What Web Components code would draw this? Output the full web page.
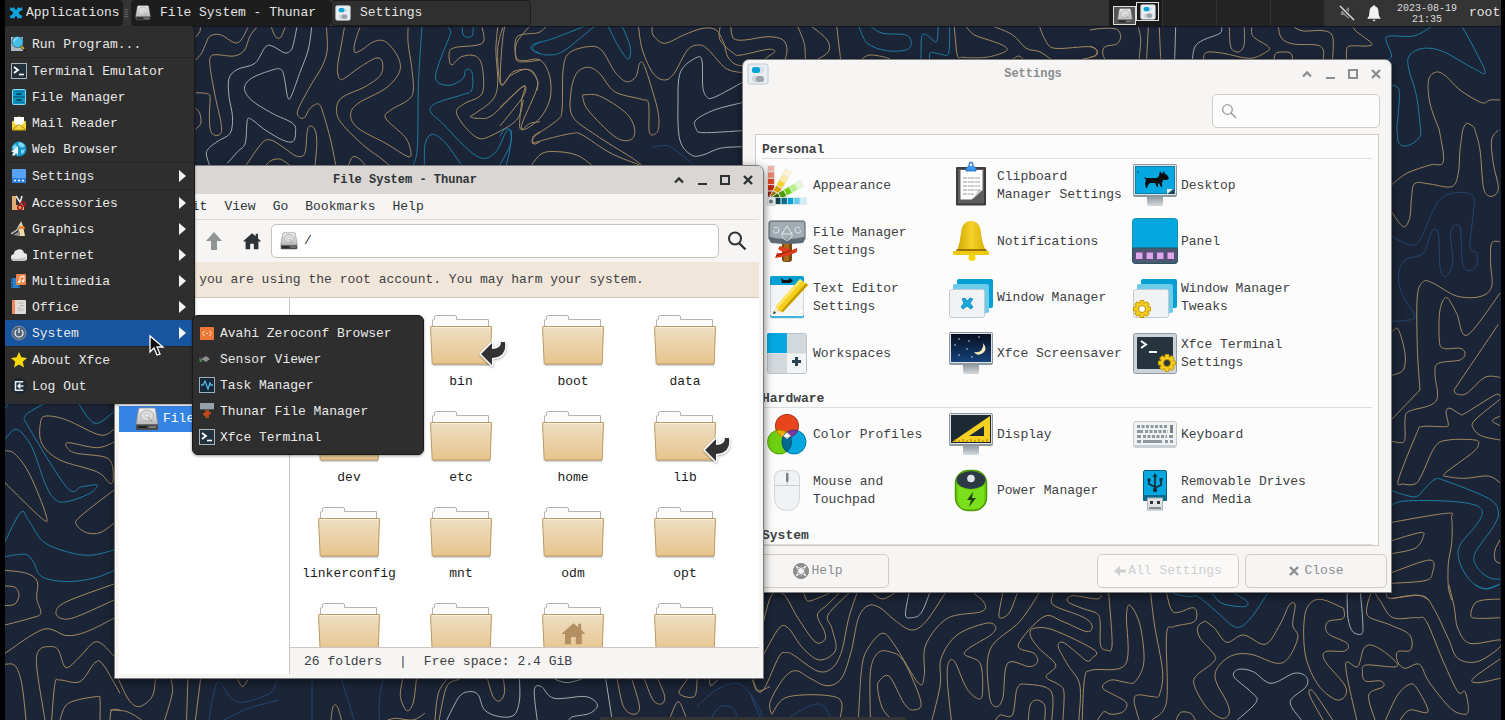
<!DOCTYPE html>
<html lang="en">
<head>
<meta charset="utf-8">
<title>Xfce Desktop</title>
<style>
  html, body { margin: 0; height: 100%; background: #000; }
  body {
    font-family: "Liberation Mono", "DejaVu Sans Mono", monospace;
    font-size: 13px; line-height: 18px; color: #2e3436;
  }
</style>
</head>
<body>
<xf-desktop>
  <xf-panel slot="panel"></xf-panel>

  <xf-window class="settings" heading="Settings" icon="toggles" inactive>
    <xf-settings></xf-settings>
  </xf-window>

  <xf-window class="thunar" heading="File System - Thunar" icon="drive">
    <xf-thunar></xf-thunar>
  </xf-window>

  <xf-menu slot="menu">
    <xf-item icon="run">Run Program...</xf-item>
    <hr>
    <xf-item icon="term">Terminal Emulator</xf-item>
    <xf-item icon="cabinet">File Manager</xf-item>
    <xf-item icon="mail">Mail Reader</xf-item>
    <xf-item icon="globe">Web Browser</xf-item>
    <hr>
    <xf-item icon="panelblue" more>Settings</xf-item>
    <hr>
    <xf-item icon="tools" more>Accessories</xf-item>
    <xf-item icon="graphics" more>Graphics</xf-item>
    <xf-item icon="cloud" more>Internet</xf-item>
    <xf-item icon="media" more>Multimedia</xf-item>
    <xf-item icon="office" more>Office</xf-item>
    <xf-item icon="power" more selected>System</xf-item>
    <hr>
    <xf-item icon="star">About Xfce</xf-item>
    <xf-item icon="logout">Log Out</xf-item>
  </xf-menu>

  <xf-menu slot="submenu" sub>
    <xf-item icon="avahi">Avahi Zeroconf Browser</xf-item>
    <xf-item icon="sensor">Sensor Viewer</xf-item>
    <xf-item icon="task">Task Manager</xf-item>
    <xf-item icon="hammer">Thunar File Manager</xf-item>
    <xf-item icon="term">Xfce Terminal</xf-item>
  </xf-menu>
</xf-desktop>

<script>
/* ---------- icons ---------- */
const monitor = screen => `
  <linearGradient id="st" x2="0" y2="1"><stop stop-color="#8b949b"/><stop offset="1" stop-color="#d5dadd"/></linearGradient>
  <path d="M16 35h16v8q0 2-2 2H18q-2 0-2-2z" fill="url(#st)"/>
  <rect x="2" y="3" width="44" height="33" rx="2" fill="#8d979e"/>
  <rect x="3" y="4" width="42" height="30" rx="1" fill="#dfe3e5"/>${screen}`;
const cog = (x, y, hole) => `<g transform="translate(${x} ${y})"><g fill="#c79a00">${
  [0, 45, 90, 135].map(a => `<rect x="-2.4" y="-9" width="4.8" height="18" rx="1" transform="rotate(${a})"/>`).join('')
  }</g><circle r="7" fill="#c79a00"/><circle r="6" fill="#f5cd1d"/><g fill="#f5cd1d">${
  [0, 45, 90, 135].map(a => `<rect x="-1.5" y="-8" width="3" height="16" transform="rotate(${a})"/>`).join('')
  }</g><circle r="3.5" fill="${hole}" stroke="#b98d00"/></g>`;
const fan = (angle, colors) => `<g transform="rotate(${angle} 8 40)">${
  colors.map((c, i) => `<rect x="4.5" y="${4.5 + i * 6.4}" width="7" height="6.4" fill="${c}" stroke="#e6eaec" stroke-width=".8"/>`).join('')}</g>`;
const layers = front => `
  <rect x="10" y="6" width="36" height="29" rx="2" fill="#04a0d4"/>
  <rect x="6" y="11" width="36" height="29" rx="2" fill="#6dcbec"/>
  <rect x="2.5" y="16.5" width="35" height="28" rx="2" fill="#f0f2f4" stroke="#c3cbd1"/>${front}`;
const house = 'M12 3.5L2 12.5h3V21h5v-6h4v6h5v-8.5h3L18.5 9V4H16v2.8z';

const ICONS = {
  appearance: [48, fan(0, ['#ecb5aa', '#e58470', '#de4526', '#bd2c10', '#8a1c08']) +
    fan(30, ['#fbf4cf', '#f9ec9c', '#f5d42a', '#d7a200', '#9c6c00']) +
    fan(60, ['#e3f8d0', '#b5ef86', '#6fd010', '#4e9a06', '#2c5c04']) +
    fan(90, ['#cdedf7', '#6acbe8', '#04a3d6', '#0a6a88', '#0d4250']) +
    '<rect x="4" y="36" width="8.5" height="8.5" rx="1.5" fill="#dfe3e6" stroke="#c5ccd1" stroke-width=".6"/><circle cx="8" cy="40.500" r="2" fill="#66737b"/>'],
  clipboard: [48, `<rect x="9" y="6" width="30" height="38.500" rx="1" fill="#3b3b3b"/><rect x="11" y="8" width="26" height="34.500" fill="#5d5d5d"/>
    <path d="M13.500 9h22v20l-11 9.500h-11z" fill="#fff"/><path d="M35.500 29l-4 0-6 9.500z" fill="#c9c9c9"/>
    <path d="M16 17h17M16 21h17M16 25h17M16 29h17M16 33h11" stroke="#8a8a8a" stroke-width=".9" stroke-dasharray="4 .8 2 .6"/>
    <path d="M19 10V7l3-2V3a2 2 0 0 1 4 0v2l3 2v3z" fill="#3c98f0" stroke="#1b66b8" stroke-width=".8"/><circle cx="24" cy="3.800" r="1.200" fill="#fff"/>`],
  desktop: [48, monitor(`<rect x="4" y="5" width="40" height="28" fill="#0b7fa8"/><rect x="5" y="6" width="38" height="26" fill="#04a7e0"/>
    <path d="M6 11q5 4 9 6h11l2-2 1-5 2 3 2-3 1 3 2 1 2 3-2 2h-4l-1 3v4h-1l-2-4-1 1v3h-1l-2-4h-5l-2 2-1 3h-1l-1-5 1-3-2-3q-5-3-7-6z" fill="#0a0d10"/><path d="M36 33v-5h6z" fill="#e8ecee"/><path d="M43 28v5h-6z" fill="#2d3b45"/>`)],
  hammerbig: [48, `<rect x="19" y="24" width="10" height="21" rx="3" fill="#7d4a10"/><rect x="21" y="24" width="5" height="20" fill="#a96a1c"/>
    <path d="M6 6q0-2 2-2h32q2 0 2 2v16q-18 6-36 0z" fill="#a3acb3" stroke="#4d5a63"/><path d="M6.500 20q17 4 35 0v3q0 2-2 3-16 2-31 0-2-1-2-3z" fill="#5f6c75"/>
    <path d="M19 17l5-8 5 8zM20 15a5 5 0 1 0 8 0M11 11q5-2 5 2 0 3-3 3-4 0-2-3M37 11q-5-2-5 2 0 3 3 3 4 0 2-3" fill="none" stroke="#dfe5e8"/>
    <path d="M12 41l2-5 7 0-6-4 2-3 12 4 5-2v4l-7 3-8 2z" fill="#dc3d1c"/><path d="M13 39l16-6" stroke="#8f1f0a"/>`],
  bell: [48, `<linearGradient id="g"><stop stop-color="#d3a900"/><stop offset=".5" stop-color="#f3d22a"/><stop offset="1" stop-color="#dcae00"/></linearGradient>
    <path d="M10 34q3-8 4-18Q15 4 24 4t10 12q1 10 5 18z" fill="url(#g)"/><path d="M10 32h29l1 2H9z" fill="#9a7200"/><rect x="6" y="34" width="36" height="4" rx="1" fill="#f0c80f"/><circle cx="25" cy="40.500" r="3.500" fill="#f8d500"/>`],
  panel: [48, `<rect x="1.500" y="1.500" width="45" height="45" rx="3" fill="#04a7e0" stroke="#168fb4"/><path d="M1.500 31h45v12.500q0 3-3 3h-39q-3 0-3-3z" fill="#485a6d" stroke="#2f5160"/>
    <g fill="#dba9e8" stroke="#6a3f86"><rect x="4.500" y="35" width="7.500" height="7.500" rx="1"/><rect x="15" y="35" width="7.500" height="7.500" rx="1"/><rect x="25.500" y="35" width="7.500" height="7.500" rx="1"/><rect x="36" y="35" width="7.500" height="7.500" rx="1"/></g>`],
  editor: [48, `<rect x="7.500" y="4" width="33" height="41" rx="1.500" fill="#f4f5f6" stroke="#d0d6da"/><path d="M7 12V5q0-2 2-2h30q2 0 2 2v7z" fill="#04a0d4"/><path d="M18 5l3 2h4l2-2 2 2 1 1-3 2h-8z" fill="#111"/>
    <path d="M7 42h34v1q0 2-2 2H9q-2 0-2-2z" fill="#3fb5de"/><path d="M8 41h32v2H8z" fill="#fff"/><path d="M33 41l7-8v8z" fill="#fff" stroke="#d6dadd" stroke-width=".6"/>
    <path d="M10 41l3-8 8 4z" fill="#f3e4c8"/><path d="M13 33L37 6l8 6-25 27-4-1z" fill="#f4d01c"/><path d="M18 38L43 10l2 2-25 27z" fill="#c79a00"/><path d="M13 33L37 6l2 2-24 27z" fill="#fbe66a"/><path d="M10 41l1-3 2 2z" fill="#222"/>`],
  winman: [48, layers('<path d="M15 26l3-1 2 3 3-3 3 1-3 4 3 4-2 2-4-3-4 3-2-2 3-4z" fill="#1ba8dc" stroke="#0b86b6" stroke-width=".8"/>')],
  tweaks: [48, layers(cog(11, 36, '#fff'))],
  workspaces: [48, `<rect x="4.500" y="4.500" width="39" height="40" rx="2" fill="#f1f3f5" stroke="#bcc4ca"/><path d="M24 5h19v19.500H24zM5 24.500h19V44H5z" fill="#d3d8dc"/><path d="M4 6q0-2 2-2h18v20H4z" fill="#04a7e0"/><path d="M32 28h3v3h3v3h-3v3h-3v-3h-3v-3h3z" fill="#2d4250"/>`],
  saver: [48, monitor(`<linearGradient id="n" x2="0" y2="1"><stop stop-color="#07101f"/><stop offset="1" stop-color="#16427c"/></linearGradient><rect x="4" y="5" width="40" height="28" fill="url(#n)"/>
    <path d="M36 14q5 6 0 10-6 4-9-1 6 1 8-3 2-3 1-6z" fill="#f5eaba"/><g fill="#fff"><circle cx="12" cy="10" r=".7"/><circle cx="22" cy="12" r=".7"/><circle cx="32" cy="8" r=".7"/><circle cx="8" cy="16" r=".7"/><circle cx="20" cy="20" r=".7"/><circle cx="12" cy="26" r=".7"/><circle cx="25" cy="28" r=".7"/></g>`)],
  termset: [48, `<rect x="2.500" y="4.500" width="43" height="40" rx="2" fill="#cdd3d8" stroke="#8f9aa2"/><rect x="6" y="8" width="36" height="32" rx="1" fill="#26343e"/><path d="M10 12l5 3.500-5 3.500" fill="none" stroke="#fff" stroke-width="2"/><path d="M18 23h8" stroke="#fff" stroke-width="2"/>` + cog(36, 34, '#26343e')],
  color: [48, `<circle cx="24" cy="16" r="12" fill="#e8451d"/><circle cx="16.500" cy="32" r="12.300" fill="#6fd010"/><circle cx="31" cy="32" r="12.300" fill="#04a7e0"/>
    <clipPath id="r"><circle cx="24" cy="16" r="12"/></clipPath><clipPath id="gr"><circle cx="16.500" cy="32" r="12.300"/></clipPath>
    <g clip-path="url(#r)"><circle cx="16.500" cy="32" r="12.300" fill="#f0b000"/><circle cx="31" cy="32" r="12.300" fill="#7b3aa0"/></g>
    <g clip-path="url(#gr)"><circle cx="31" cy="32" r="12.300" fill="#046a90"/></g><path d="M24 22l4 4-4 3-4-3z" fill="#fff"/>
    <g fill="none" stroke="#0005" stroke-width=".8"><circle cx="24" cy="16" r="11.700"/><circle cx="16.500" cy="32" r="12"/><circle cx="31" cy="32" r="12"/></g>`],
  display: [48, monitor(`<rect x="4" y="5" width="40" height="28" fill="#1d2a33"/><path d="M43 6v26H5z" fill="#f6cf23"/><path d="M37 16v10H22z" fill="#1d2a33"/><path d="M8 32v-3m4 3v-2m4 2v-3m4 3v-2m4 2v-3m4 3v-2m4 2v-3m4 3v-2m4 2v-3" stroke="#a07c00"/>`)],
  keyboard: [48, `<rect x="2.500" y="11.500" width="43" height="26" rx="2.500" fill="#f0f2f4" stroke="#c4cbd0"/><path d="M3 35h42v1q0 2-2 2H5q-2 0-2-2z" fill="#c9d0d5"/>
    <g fill="none" stroke="#8e989f" stroke-width="3"><path d="M6 16.500h31" stroke-dasharray="3 1.500"/><path d="M14 21.500h23" stroke-dasharray="3 1.500"/><path d="M12 26.500h24" stroke-dasharray="3 1.500"/><path d="M6 21.500h6M6 26.500h4M38 26.500h4M6 31.500h4M12 31.500h19M34 31.500h3M39 31.500h3"/><path d="M40.500 15v8" stroke="#77828a"/></g>`],
  mouse: [48, `<path d="M11.500 12q0-7.500 7.500-7.500h10q7.500 0 7.500 7.500v20Q36 44.500 24 44.500T11.500 32z" fill="#f0f2f4" stroke="#d0d6da"/><path d="M11.500 19.500h25M24 4.500v15" stroke="#c6cdd2" fill="none"/><rect x="23" y="7" width="2.500" height="9" rx="1" fill="#77828a"/>`],
  battery: [48, `<rect x="8.500" y="4.500" width="31" height="40" rx="13" fill="#6cd00c" stroke="#4e9a06" stroke-width="1.500"/><path d="M11 20q13 8 26 0v16q-3 6-8 7H18q-6-1-7-7z" fill="#7be01c"/><ellipse cx="24" cy="14" rx="14.500" ry="9" fill="#2b3a44"/><circle cx="24" cy="12.500" r="3.800" fill="#dfe4e7"/><path d="M26 26l-6 8h4l-2 7 7-9h-4z" fill="#24421a"/>`],
  usb: [48, `<path d="M12.500 6q0-1.500 1.500-1.500h20q1.500 0 1.500 1.500v28.500h-23z" fill="#04a7e0" stroke="#0c5e7c"/><path d="M12.500 29h23v5.500h-23z" fill="#0a6c8d"/><rect x="16.500" y="32" width="15" height="12" fill="#dfe3e6" stroke="#aab3b9"/><rect x="19" y="35" width="3" height="3" fill="#333"/><rect x="26" y="35" width="3" height="3" fill="#333"/><path d="M18 42h12" stroke="#333"/>
    <path d="M24 24V9M24 21l-6-3v-4M24 22l6-3v-4" stroke="#11303d" stroke-width="1.800" fill="none"/><path d="M21.500 11L24 7l2.500 4z" fill="#11303d"/><circle cx="24" cy="24" r="2.200" fill="#11303d"/><circle cx="18" cy="14" r="1.700" fill="#11303d"/><rect x="28.500" y="12" width="3" height="3" fill="#11303d"/>`],

  toggles: [22, `<rect x="1" y="1" width="20" height="20" rx="2" fill="#e9eef1" stroke="#c0c8ce"/><rect x="5" y="4" width="12" height="6" rx="3" fill="#d5dee4"/><rect x="5" y="4" width="8" height="6" rx="2.500" fill="#08a4d8"/><rect x="5" y="13" width="12" height="6" rx="3" fill="#d0d5d9" /><rect x="9" y="13" width="8" height="6" rx="2.500" fill="#9aa4ac"/>`],
  drive: [24, `<linearGradient id="d" x2="0" y2="1"><stop stop-color="#f4f4f4"/><stop offset="1" stop-color="#b9b9b9"/></linearGradient><path d="M3.500 2.500q0-1.500 1.500-1.500h14q1.500 0 1.500 1.500l2.500 15H1z" fill="url(#d)" stroke="#8a8a8a" stroke-width=".8"/><ellipse cx="12" cy="8.500" rx="6.500" ry="5.500" fill="#dcdcdc" stroke="#a3a3a3" stroke-width=".8"/><circle cx="12" cy="8.500" r="1.800" fill="#f8f8f8" stroke="#aaa" stroke-width=".6"/><path d="M17 15l-4-5" stroke="#999"/><path d="M1 17.500h22v4q0 1.500-1.500 1.500h-19Q1 23 1 21.500z" fill="#4a4a4a"/><path d="M3 20h9" stroke="#222" stroke-width="2"/><path d="M14 20h7" stroke="#aaa"/>`],
  run: [16, `<path d="M0 1h12v14H0z" fill="#aeb8bf"/><path d="M10 10l5 5" stroke="#222" stroke-width="3"/><path d="M9 9l4 4" stroke="#d9a521" stroke-width="2"/><circle cx="6.500" cy="6" r="5.600" fill="#45bfe6" stroke="#24607a" stroke-width=".8"/><path d="M3 6a4 4 0 0 1 4-4" stroke="#bfeaf8" fill="none"/>`],
  term: [16, `<rect x=".5" y=".5" width="15" height="15" fill="#22313b" stroke="#aab6be"/><path d="M3 4l4 3-4 3" fill="none" stroke="#fff" stroke-width="1.800"/><path d="M8 11.500h5" stroke="#fff" stroke-width="1.600"/>`],
  cabinet: [16, `<rect x="1.500" y=".5" width="13" height="15" rx="1" fill="#0c96c6" stroke="#8fd6ec"/><path d="M2 8h12" stroke="#08495f"/><path d="M3 2.500h10M3 13.500h10" stroke="#0775a0"/><path d="M5.500 5h5M5.500 11h5" stroke="#0a3547" stroke-width="1.400"/>`],
  mail: [16, `<path d="M1 7l7-6 7 6v8H1z" fill="#e9c62a"/><path d="M3 2h10v7l-5 3-5-3z" fill="#fff"/><path d="M1 6l7 6 7-6v9H1z" fill="#f4d63c"/><path d="M1 15l6-5h2l6 5" fill="none" stroke="#a88400"/><path d="M1 15h14" stroke="#caa400"/>`],
  globe: [16, `<circle cx="8" cy="8" r="7.500" fill="#1695c9"/><path d="M8 1q5 1 6 4l-3 2-3-2-1-2zM10 9l4-1-2 5-2-1zM1 6l4-3 1 3-3 3z" fill="#7ed7f2"/><path d="M7 5v9l-2-2-2 3-2-1 2-3H0z" fill="#f3f3f3"/>`],
  panelblue: [16, `<rect x="1" y="1" width="14" height="14" rx="1" fill="#55a4f8"/><path d="M1 10h14v4q0 1-1 1H2q-1 0-1-1z" fill="#2c7fe0"/><path d="M3 12.500h10" stroke="#fff" stroke-width="1.500" stroke-dasharray="2 2"/>`],
  tools: [16, `<path d="M1 1h4v9h8v5H1z" fill="#e0ad72"/><path d="M5 1l6 9M11 1L9 8" stroke="#e8e8e8" stroke-width="1.600"/><circle cx="12" cy="9" r="2.200" fill="none" stroke="#b01818" stroke-width="1.500"/><circle cx="9" cy="12.500" r="2.200" fill="none" stroke="#b01818" stroke-width="1.500"/>`],
  graphics: [16, `<path d="M10 0l2 5 2 10H7L8 5z" fill="#f1d9a8"/><path d="M8 5h5l1 3H8z" fill="#e8872b"/><path d="M0 13l6-4 3-6" stroke="#bfbfbf" stroke-width="1.500" fill="none"/><path d="M2 14l7-4v5z" fill="#8f8f8f"/>`],
  cloud: [16, `<path d="M4 14a3.500 3.500 0 0 1-1-7 4 4 0 0 1 3-4 4.500 4.500 0 0 1 7 3 4 4 0 0 1-1 8z" fill="#eaeaea"/><path d="M1 11q7 2 14-1 0 4-3 4H4q-3 0-3-3z" fill="#c3c3c3"/>`],
  media: [16, `<rect x="0" y="5" width="9" height="10" fill="#2b80c8"/><path d="M1 5v10M8 5v10" stroke="#0c2b46" stroke-dasharray="1.500 1"/><rect x="5" y="1" width="10" height="11" rx="1" fill="#f08545"/><path d="M9 9V4l4-1v5" fill="none" stroke="#fff"/><circle cx="8" cy="9" r="1.200" fill="#fff"/><circle cx="12" cy="8" r="1.200" fill="#fff"/>`],
  office: [16, `<rect x="1" y="1" width="14" height="14" rx="1" fill="#dedbd8"/><rect x="1" y="1" width="3" height="14" fill="#ec8a5c"/><path d="M7 4h6M7 9h3M7 11h6M9 6.500h4" stroke="#b8b3ae"/>`],
  power: [16, `<circle cx="8" cy="8" r="7" fill="#51647a" stroke="#8090a2"/><path d="M5.500 5a4 4 0 1 0 5 0M8 3v5" fill="none" stroke="#e8eef2" stroke-width="1.300"/>`],
  star: [16, `<path d="M8 0l2.400 5.300 5.600.6-4.200 3.800L13 15.600 8 12.600 3 15.600l1.200-5.900L0 5.900l5.600-.6z" fill="#f8da08"/>`],
  logout: [16, `<circle cx="8" cy="8" r="7.500" fill="#1f2d39" stroke="#18222b"/><path d="M11.500 4.500v-.8H4.500v8.600h7v-.8" fill="none" stroke="#e8eef2" stroke-width="1.500"/><path d="M7 8h5.500M9.500 5.500L7 8l2.500 2.500" fill="none" stroke="#e8eef2" stroke-width="1.500"/>`],
  avahi: [16, `<rect x="1" y="2" width="14" height="13" rx="1" fill="#ee7836"/><path d="M5.500 6l-2 2.500 2 2.500M10.500 6l2 2.500-2 2.500M7 8.500h2" fill="none" stroke="#fbe0cc"/>`],
  sensor: [16, `<path d="M2 8l5-3 4 3-4 3z" fill="#8e8e8e"/><path d="M0 6h3v2H0z" fill="#55306a"/><path d="M0 8h3v3H1z" fill="#393"/>`],
  task: [16, `<rect x=".5" y=".5" width="15" height="15" fill="#16293a" stroke="#9fb0bd"/><path d="M2 8h2l2-4 3 8 2-6 1 2h2" fill="none" stroke="#52b7df" stroke-width="1.300"/>`],
  hammer: [16, `<path d="M1 0h14v7H1z" fill="#97a1a8"/><path d="M1 6h14v1H1z" fill="#4c575f"/><path d="M6 7h4v8H6z" fill="#a34e17"/><path d="M4 10l8-1v2l-7 2z" fill="#d2401c"/>`],
  xfce: [16, `<path d="M2 2q2 2 4 0 1 3 2 3t2-3q2 2 4 0 0 3 1 3-4 1-4 3t4 3q-2 0-1 3-2-2-4 0-1-3-2-3t-2 3q-2-2-4 0 1-3-1-3 4-1 4-3T1 5q2 0 1-3z" fill="#12a1d8"/>`],
  mute: [16, `<path d="M2 6h3l5-4v12l-5-4H2z" fill="#8a8a8a"/><path d="M1 1l14 14" stroke="#343434" stroke-width="3.500"/><path d="M1 1l14 14" stroke="#ddd" stroke-width="1.400"/>`],
  ring: [16, `<path d="M2 13q2-2 2-6 0-4 3-5 0-1 1-1t1 1q3 1 3 5 0 4 2 6z" fill="#f2f2f2"/><path d="M6.500 14h3L8 15.500z" fill="#f2f2f2"/>`],
  grip: [10, `<path d="M2 .5h4M2 3.500h4M2 6.500h4M2 9.500h4" stroke="#777"/>`],
  left: [24, `<path d="M20 9v6h-8v6L3 12l9-9v6z" fill="#8e9192"/>`],
  right: [24, `<path d="M4 9v6h8v6l9-9-9-9v6z" fill="#8e9192"/>`],
  up: [24, `<path d="M12 3l8 9h-5v9H9v-9H4z" fill="#909494"/>`],
  home: [24, `<path d="${house}" fill="#2e3436"/>`],
  find: [24, `<circle cx="10" cy="9.500" r="6" fill="none" stroke="currentColor" stroke-width="2"/><path d="M14 14l6.500 6.500" stroke="currentColor" stroke-width="2.400"/>`],
  findthin: [16, `<circle cx="6.500" cy="6.500" r="4.800" fill="none" stroke="#9b9e9f" stroke-width="1.300"/><path d="M10 10l5 5" stroke="#9b9e9f" stroke-width="1.600"/>`],
  help: [16, `<circle cx="8" cy="8" r="6" fill="none" stroke="#8b8e8f" stroke-width="3.600"/><path d="M3 3l3 3M13 3l-3 3M3 13l3-3M13 13l-3-3" stroke="#f6f5f4" stroke-width="1.600"/><circle cx="8" cy="8" r="7.500" fill="none" stroke="#8b8e8f"/><circle cx="8" cy="8" r="3.500" fill="none" stroke="#8b8e8f"/>`],
  back: [12, `<path d="M12 4.500v3H6V11L0 6l6-5v3.500z" fill="#cfcfce"/>`],
  cross: [12, `<path d="M2 2l8 8M10 2l-8 8" stroke="currentColor" stroke-width="2.400"/>`],
  shade: [12, `<path d="M2 8.500l4-4 4 4" fill="none" stroke="currentColor" stroke-width="2.400"/>`],
  min: [12, `<path d="M2 10h9" stroke="currentColor" stroke-width="2"/>`],
  max: [12, `<rect x="2" y="2" width="8" height="8" fill="none" stroke="currentColor" stroke-width="2"/>`],
  more: [12, `<path d="M3 0l7 6-7 6z" fill="#f2f2f2"/>`],
  pointer: [24, `<path d="M3 2v16l4-4 3 7 3-1-3-7h6z" fill="#111" stroke="#fff" stroke-width="1.300"/>`],
};

class XfIcon extends HTMLElement {
  connectedCallback() {
    if (this.shadowRoot) return;
    const [box, art] = ICONS[this.getAttribute('name')];
    const size = this.getAttribute('size') || box;
    this.attachShadow({ mode: 'open' }).innerHTML =
      `<style>:host{display:inline-flex;flex:none}svg{display:block}</style>
       <svg width="${size}" height="${size}" viewBox="0 0 ${box} ${box}" aria-hidden="true">${art}</svg>`;
  }
}
customElements.define('xf-icon', XfIcon);

/* Small helper: registers an element whose shadow root comes from a render function. */
const RESET = `*,*::before{box-sizing:border-box}
  button,input{font:inherit;color:inherit;background:none;border:0;margin:0;padding:0;text-align:left}
  svg{display:block}`;
function element(tag, render) {
  customElements.define(tag, class extends HTMLElement {
    connectedCallback() {
      if (this.shadowRoot) return;
      this.attachShadow({ mode: 'open' }).innerHTML = render(this).replace('<style>', '<style>' + RESET);
    }
  });
}

/* ---------- wallpaper: contour lines, grouped in patches (origin x, y, scale x, scale y) ---------- */
const PATCHES = [
  [0, 0, .3444, .3333, `
g 568,112 580,95 582,82
g 568,278 605,282 610,300 608,340 610,385 620,404 640,402 642,370 625,290 610,200 612,170 630,164 680,168 710,150 725,110 745,82
g 568,180 585,160 598,130 610,108 640,104 680,128 700,120 720,82
g 568,325 580,340 583,370 568,388
g 788,82 800,110 815,112 828,82
w 905,82 895,150 870,220 845,290 835,290 825,230 815,208 790,210 730,235 710,265 730,300 790,340 850,370 858,400 850,425 820,420 770,390 730,358 718,362 712,430 690,455 660,490
w 862,82 850,140 840,155 825,158 790,138 770,142 740,190 690,208 665,235 665,290 675,350 668,400 630,425 600,455 608,495
g 948,82 950,150 935,200 900,260 865,330 870,352 885,352 900,325 925,312 940,345 960,420 975,495
g 715,495 760,430 785,420 820,440 860,468 885,460 892,395 900,378 915,390 920,430 915,495
g 772,495 790,480 815,478 840,495
g 1000,82 992,130 980,200 985,235 1000,235 1040,205 1090,175 1110,185 1105,225 1060,260 990,295 978,340 1000,380 1060,440 1100,470 1130,495
g 1045,82 1030,130 1030,157 1050,150 1085,125 1120,125 1155,170 1160,215 1120,265 1040,310 1018,345 1040,385 1120,430 1185,470 1192,450 1175,410 1120,355 1135,330 1185,300 1200,270 1195,200 1185,130 1185,82
g 1012,495 1025,470 1045,478 1060,495
b 1225,82 1215,250 1212,440 1200,495
b 1232,495 1235,430 1255,403 1290,425 1330,480 1340,495
b 1300,82 1308,100 1285,160 1265,225 1275,250 1310,255 1345,235 1352,210 1370,215 1370,270 1340,285 1265,310 1250,335 1285,370 1350,440 1400,475 1440,455 1470,395 1485,395 1480,450 1470,495
b 1342,82 1345,105 1360,112 1372,105 1374,82
g 1400,82 1400,130 1325,142 1305,155 1310,195 1340,170 1380,168 1400,200 1400,280 1350,310 1325,335 1350,380 1390,415 1430,405 1500,360 1520,300
g 1445,82 1440,150 1445,250 1430,300 1380,340 1365,350 1390,355 1430,345 1520,258 1515,300 1510,385 1540,370 1568,365
g 1460,82 1445,150 1455,255 1490,215 1540,210 1560,240 1560,270
g 1535,82 1500,130 1500,180 1530,185 1568,180
b 1568,125 1545,145 1568,160
g 1568,395 1548,410 1550,432 1568,425`],
  [500, 20, .3827, .3333, `
g 12,20 5,80 2,190 30,165 70,148 95,175 95,210 55,325 100,300 130,240 130,170 105,120 60,122 42,110 45,50 100,38 120,20
g 0,262 60,200 60,230 0,318
g 85,370 130,355 190,340 215,345 290,400 365,435
g 85,372 90,350 150,300 162,270 165,150 180,100 230,80 265,90 300,155 330,185 355,170 365,130 378,140 410,260 415,320 405,342 390,335 388,250 370,238 300,215 260,160 230,142 200,160 185,220 190,290 250,345 340,410 370,435
g 215,225 260,228 330,280 352,330 340,360 300,350 230,270 215,225
g 82,435 110,400 150,395 200,405 240,435
b 218,20 140,55 85,75 90,95 130,105 170,90 245,20
b 283,20 310,80 335,118 340,80 320,20
g 362,20 372,90 400,160 430,180 455,160 490,90 520,75 545,90 590,145 632,158
g 398,20 400,45 430,70 480,45 530,25 565,30 585,70 595,110 620,135 670,135 700,110 718,95 700,88 630,105 610,100 575,60 575,20
g 603,20 610,55 640,60 700,50 740,60 750,90 745,118
g 778,20 795,70 798,118
g 815,20 855,60 858,95 830,118
g 880,20 890,118
w 632,188 560,232 540,230 530,200 528,125 515,112 472,155 465,250 470,360 500,405 530,405 575,385 632,380
w 632,248 560,270 512,300 512,325 530,338 632,332
b 938,20 960,70 1010,92 1060,90 1075,70 1060,45 1000,40 970,20
b 1100,118 1102,50 1115,45 1140,65 1145,20
b 1122,118 1125,98 1150,102 1172,100 1175,20
g 1187,20 1195,105 1210,112 1270,112 1320,95 1320,80 1290,65 1240,45 1218,20
g 1292,20 1340,45 1375,85 1410,95 1440,118
g 1410,20 1425,60 1450,85 1540,80 1560,95 1550,110 1520,118
g 1340,118 1355,108 1368,118
g 945,118 965,105 1000,110 1020,118
d 395,382 440,378 480,410 505,435
b 0,435 28,370 25,330 10,330 0,350`],
  [1090, 0, .3333, .3333, `
g 0,90 40,85 80,88 92,110 80,132 45,140 38,160 45,178
g 0,138 20,150 20,165 0,172
g 145,82 152,120 147,178
g 175,82 170,178
g 208,82 212,178
w 257,82 254,178
w 395,82 390,100 340,120 315,140 307,178
g 418,82 422,140 440,156 455,150 463,130 463,82
g 340,178 350,157 400,160 480,175 530,155 535,140 490,110 485,82
g 552,178 560,158 600,158 608,178
g 565,82 575,115 610,132 680,135 700,150 700,178
g 613,82 640,93 700,92 728,110 728,178
g 790,82 800,95 845,130 830,138 780,138 770,150 770,178
b 1022,82 970,108 900,108 888,120 905,165 895,180
b 1118,82 1185,212 1150,205 1060,155 1000,145 960,165 955,200 980,290 992,390
b 905,255 925,265 928,300 920,390
g 1048,390 1020,310 1016,240 1040,216 1070,230 1110,270 1175,308 1200,300 1230,300
g 1118,390 1130,370 1150,380 1155,390`],
  [1110, 130, .3333, .3333, `
b 862,0 865,35 880,48 905,42 930,20 932,0
g 988,0 1000,95 960,105 890,130 847,163
g 1058,0 1050,60 1045,130 1025,170 960,162 915,160 905,200 900,260 885,290 865,275 847,248
g 1095,0 1110,60 1120,170 1135,197 1155,195 1165,170 1150,100 1145,30 1165,0
d 847,320 900,345 930,330 970,240 1000,200 1050,187 1090,200 1090,250 1080,350 1100,370 1100,405 1080,422 1058,400 1052,300 1040,285 1022,310 1028,400 1005,440 990,410 985,310 965,305 940,370 885,390 865,440 880,500 915,560 880,572 847,574
g 1170,335 1145,340 1142,400 1145,470 1110,500 1040,498 970,460 940,455 922,500 922,650 930,780
g 1170,490 1072,615 1040,550 1010,503 990,540 988,630 1000,655 1050,655 1065,670 1050,690 985,700 975,730 982,780
g 1032,780 1100,680 1165,583
g 847,605 865,598 885,670 880,720 847,736`],
  [1385, 330, .3333, .3333, `
g 105,180 20,268
g 157,180 155,210 130,228 70,245 60,270 60,325 50,338 20,334
g 207,180 215,192 245,190 300,142 345,142
g 345,200 330,195 240,250 225,252 195,235 183,245 190,285 175,290 110,290 95,310 40,450 55,462 90,462 110,435 150,350 190,330 270,330 280,345 260,370 180,430 190,440 240,445 310,438 345,458
g 345,208 270,270 265,295 290,318 345,330
g 345,258 322,272 345,287
b 20,482 60,495 95,500 120,475 150,448 180,452 310,505 340,545 325,590 270,670 275,710 310,742 345,748
b 20,525 60,513 180,513 270,525 292,550 270,590 225,645 222,690 250,745 295,776 345,762
g 20,577 185,550 200,565 200,640 190,700 190,770 200,810
g 20,632 105,608 115,620 90,655 20,671
g 20,728 135,690 142,730 120,752 20,760
g 345,630 330,660 330,690 345,700
g 20,806 80,796 110,798 130,810`],
  [750, 585, .4815, .3333, `
g 28,110 45,30 70,28 100,100 135,170 155,165 155,140 140,90 160,60 185,25
g 112,25 120,48 140,40 165,25
g 28,210 60,130 80,130 110,190 145,225 178,195 170,130 162,90 205,25
g 5,285 15,318 30,310 60,215 75,203 90,210 140,258 170,250 190,200 205,100 222,25
g 45,388 42,350 70,280 95,257 125,280 160,302 190,280 210,200 225,100 245,62 270,68 300,105 335,135 365,110 405,25
g 45,388 80,335 182,338 187,405
d 80,400 120,365 150,360 170,405
d 0,325 20,395
g 225,405 232,250 245,190 275,145 300,180 350,295 362,270 365,180 410,100 480,80 487,55 465,25
g 250,405 250,260 265,205 290,200 320,230 355,350 340,375 320,355 290,275 270,285 265,310 275,370 295,405
w 330,25 323,90 335,98 355,85 373,25
g 255,25 275,42 300,25
g 378,405 395,300 397,220 430,150 490,115 510,125 500,150 445,203 478,235 483,320 475,342 450,310 425,230 412,235 410,290 418,405
g 525,25 517,90 525,98 540,80 555,25
g 600,25 560,110 498,195 497,330 510,365 525,340 535,235 580,245 597,230 590,205 557,180 610,95 650,110 700,140 710,120 690,95 630,60 630,25
g 730,30 720,42 670,32 660,50 690,70 720,85 727,110 728,180 740,195 752,180 745,25
g 510,405 520,390 545,390 555,310 575,298 625,318 627,405
g 650,405 652,320 640,298 615,275 635,240 600,190 582,150 590,130 630,135 715,195 710,220 700,228 680,205 650,172 640,185 660,240 685,300 683,405
g 578,405 582,360 595,345 612,360 612,405
g 690,405 695,280 710,255 780,238 782,90 790,62 810,120 818,230 800,290 780,292 750,285 733,310 780,350 775,380 750,388 735,380 722,405
g 832,25 840,120 857,260 850,330 838,335 805,330 798,350 808,405
g 835,405 865,350 865,150 880,125 920,112 928,90 920,68 880,82 865,25
b 878,25 910,35 930,35 965,75 1000,120 1020,125 1045,90 1075,25
b 960,25 980,55 1025,65 1033,50 1005,25
g 885,405 895,382 915,385 925,405
g 945,108 930,125 935,160 965,210 960,235 925,275 925,310 950,370 980,400 995,385 990,350 968,290 970,250 1000,212 1040,208 1095,235 1120,215 1138,155 1127,120 1132,60 1120,60 1100,120 1070,178 1025,150 990,172 965,130 945,108
w 1012,405 1052,350 1040,320 1005,275 1015,253 1045,260 1082,295 1130,265 1155,275 1155,305 1122,350 1145,405
g 1233,70 1185,43 1158,65 1150,130 1155,220 1180,300 1215,343 1235,335 1235,300 1195,230 1195,200 1235,198 1240,175 1200,145 1200,110 1232,100 1233,70
w 1240,25 1242,100 1252,140 1270,147 1273,120 1268,25
g 1260,405 1237,240 1262,245 1275,190 1295,182 1330,215 1342,245 1280,240 1272,260 1278,288 1310,288 1315,305 1285,330 1298,405
g 1290,25 1282,60 1285,95 1330,120 1370,150 1372,195 1345,200 1345,230 1360,250 1390,238 1410,290 1455,370 1485,388 1492,370 1485,320 1470,320 1440,230 1405,110 1385,98 1335,98 1310,50 1298,25
g 1322,25 1330,40 1395,32 1420,70 1450,160 1470,220 1510,230 1555,190 1558,165 1495,175 1470,130 1463,70 1452,0
g 1558,42 1510,50 1497,90 1510,100 1558,98
g 1558,222 1502,280 1512,293 1558,280
b 1505,0 1530,12 1555,0
g 1210,405 1170,320 1162,330 1190,405
g 1320,405 1345,330 1370,298 1385,310 1408,380 1370,375 1350,405`],
  [0, 400, .3333, .3333, `
b 15,25 25,12
b 135,10 90,35 75,50 85,80 200,262 245,260 290,255 270,280 200,305 165,298 135,250 95,140 50,88 15,118
b 235,10 285,70 342,35
g 342,88 300,105 200,60 140,48 122,65 125,130 180,180 290,215 330,250 340,235 335,190 310,170 230,160 203,145 205,128 290,143 342,127
g 15,152 45,162 90,225 138,345 125,355 15,248
g 342,270 240,350 230,375 260,398 300,398 342,370
b 15,425 62,337 85,360 130,425 200,455 270,466 342,450
b 15,470 75,463 100,485 125,530 200,545 280,535 342,512
g 15,511 80,520 112,545 110,595 122,640 90,655 15,675
g 15,558 45,562 57,585 45,612 15,617
g 342,552 200,605 168,635 185,656 230,650 342,600
g 15,760 130,688 200,707 260,695 342,655
g 135,960 110,800 118,750 150,740 175,750 198,803 240,770 290,725 342,768
g 78,960 65,850 45,797 15,793
g 155,960 165,850 180,840 240,845 285,788 310,795 360,880
g 180,960 205,910 290,890 300,900 300,960
g 330,960 335,930 360,930`],
  [110, 400, .4209, .3333, `
g 20,838 45,900 70,920 100,890 108,838
g 0,930 40,935 75,960
g 145,838 148,880 130,960
g 185,838 182,960
g 215,838 203,960
d 235,960 245,890 258,845 285,890 315,907 380,880 397,838
d 270,960 330,925 400,900
d 480,838 480,960
d 648,838 640,900 640,960
d 550,838 580,960
g 303,838 315,860 328,838
g 525,960 530,920 540,920 550,960
g 695,838 690,890 705,932 720,910 728,838
g 660,960 680,955 720,960 748,940
g 800,838 780,880 772,960
g 782,960 800,860 830,838
g 897,838 910,890 925,903 937,880 935,838
w 800,960 830,890 855,875 875,885 890,930 925,950 960,945 973,900 973,838
w 1015,960 1008,870 1025,860 1055,895 1130,890 1158,915 1140,940 1100,950 1090,960
w 1057,838 1085,848 1120,838
w 1178,838 1193,960
g 1205,838 1220,920 1245,943 1258,920 1240,838
g 1270,838 1290,900 1310,912 1318,890 1302,838
g 1372,838 1352,880 1388,890 1395,838
g 1424,838 1428,857 1445,838
d 1395,920 1440,870 1490,850 1520,880 1540,920 1550,950
d 1425,960 1450,920 1480,925 1490,950
g 1528,838 1540,872 1568,860
g 1330,955 1350,905 1368,950`],
];
const INK = { g: '#a38a60', b: '#1b7ca3', w: '#9fadb1', d: '#224672' };

/* Turns a list of points into a smooth curve that runs through all of them. */
function smooth(p) {
  let d = `M${p[0]}`;
  for (let i = 0; i < p.length - 1; i++) {
    const a = p[i - 1] || p[i], b = p[i], c = p[i + 1], e = p[i + 2] || c;
    const k = (u, v, w, s) => [0, 1].map(n => (u[n] + s * (w[n] - v[n]) / 6).toFixed(1));
    d += `C${k(b, a, c, 1)} ${k(c, b, e, -1)} ${c.map(n => n.toFixed(1))}`;
  }
  return d;
}
element('xf-wallpaper', () => {
  const lines = PATCHES.map(([ox, oy, kx, ky, text]) => text.trim().split('\n').map(row => {
    const [ink, ...pts] = row.trim().split(' ');
    const points = pts.map(s => s.split(',').map(Number)).map(([x, y]) => [ox + x * kx, oy + y * ky]);
    return `<path d="${smooth(points)}" stroke="${INK[ink]}"/>`;
  }).join('')).join('');
  return `<style>:host{position:absolute;inset:0;background:#1c2537}svg{width:100%;height:100%}</style>
    <svg viewBox="5 0 1496 720" preserveAspectRatio="xMidYMid slice" fill="none" stroke-width="1" aria-hidden="true">${lines}</svg>`;
});

/* ---------- desktop ---------- */
element('xf-desktop', () => `<style>
  :host{display:block;position:relative;margin:0 4px 0 5px;height:100vh;overflow:hidden}
  ::slotted(xf-window){position:absolute}
  ::slotted(.settings){left:737px;top:59px;width:650px}
  ::slotted(.thunar){left:109px;top:165px;width:650px}
  ::slotted(xf-menu){position:absolute;left:0;top:26px}
  ::slotted(xf-menu[sub]){left:187px;top:315px}
  .dock{position:absolute;left:595px;bottom:0;width:306px;height:3px;background:#333}
  .pointer{position:absolute;left:142px;top:334px}
  </style>
  <xf-wallpaper></xf-wallpaper><slot name="panel"></slot><div class="dock"></div>
  <slot></slot><slot name="menu"></slot><slot name="submenu"></slot>
  <xf-icon class="pointer" name="pointer"></xf-icon>`);

/* ---------- top panel ---------- */
element('xf-panel', () => `<style>
  :host{display:flex;position:relative;height:26px;background:#343434;color:#e4e4e4;align-items:stretch;box-shadow:0 1px 1px #0006}
  button{display:flex;align-items:center;white-space:nowrap}
  .apps{width:118px;gap:2px;padding-left:3px;background:#1d1d1d;border-radius:0 4px 4px 0}
  .grip{align-self:center;width:8px}
  .task{width:200px;padding-left:4px;gap:9px;border-radius:4px}
  .task.on{background:#1d1d1d}
  .task.off{background:#2f2f2f;border:1px solid #1c1c1c;padding-left:3px}
  .fill{flex:1}
  .pager{display:flex}
  .pager button{width:54px;border-right:1px solid #343434;background:#242424}
  .pager .here{background:#1a1a1a;padding-left:4px;align-items:flex-start}
  .mini{border:1px solid #e0e0e0;width:23px;height:19px;display:flex;align-items:center;justify-content:center;margin-top:2px}
  .mini:first-child{margin-top:6px;background:#555}
  .tray{display:flex;align-items:center;padding-left:14px;gap:10px}
  time{font-size:10px;line-height:11px;text-align:center;width:60px;align-self:center;margin:2px 12px 0 14px;color:#dcdcdc}
  .user{width:32px}
  </style>
  <button class="apps"><xf-icon name="xfce"></xf-icon>Applications</button>
  <xf-icon class="grip" name="grip"></xf-icon>
  <button class="task on"><xf-icon name="drive" size="16"></xf-icon>File System - Thunar</button>
  <button class="task off"><xf-icon name="toggles" size="16"></xf-icon>Settings</button>
  <span class="fill"></span>
  <div class="pager">
    <button class="here" aria-label="Workspace 1"><span class="mini"><xf-icon name="drive" size="16"></xf-icon></span><span class="mini"><xf-icon name="toggles" size="16"></xf-icon></span></button>
    <button aria-label="Workspace 2"></button><button aria-label="Workspace 3"></button><button aria-label="Workspace 4"></button>
  </div>
  <div class="tray"><button aria-label="Volume"><xf-icon name="mute"></xf-icon></button><button aria-label="Notifications"><xf-icon name="ring" size="18"></xf-icon></button></div>
  <time datetime="2023-08-19T21:35">2023-08-19<br>21:35</time>
  <button class="user">root</button>`);

/* ---------- menus ---------- */
element('xf-menu', () => `<style>
  :host{display:flex;box-sizing:border-box;flex-direction:column;width:190px;padding:5px 0;background:#2e2e2e;border:solid #1a1a1a;border-width:0 1px 0 0;border-radius:0 5px 0 0;color:#e9e9e9;box-shadow:0 1px 3px #0006}
  :host([sub]){width:232px;padding:4px 0;border:1px solid #1a1a1a;border-radius:6px}
  ::slotted(hr){margin:0;border:0;height:1px;background:#262626}
  </style><slot></slot>`);
element('xf-item', el => `<style>
  :host{display:block}
  button{display:flex;align-items:center;width:100%;height:26px;gap:5px;padding:0 6px;white-space:nowrap}
  :host([selected]) button{background:#17559f}
  span{padding-top:2px}
  .more{margin-left:auto}
  </style><button role="menuitem"><xf-icon name="${el.getAttribute('icon')}"></xf-icon><span><slot></slot></span>${
  el.hasAttribute('more') ? '<xf-icon class="more" name="more"></xf-icon>' : ''}</button>`);

/* ---------- window frame ---------- */
element('xf-window', el => `<style>
  :host{display:flex;flex-direction:column;box-sizing:border-box;background:#f6f5f4;border:1px solid #7d7d7d;border-radius:7px 7px 0 0;padding:0 4px 4px;box-shadow:0 3px 10px #0008}
  header{display:flex;align-items:center;height:28px;margin:0 -4px;padding-right:4px;background:#dad6d3;border-radius:6px 6px 0 0;color:#2e3436}
  :host([inactive]) header{background:none;color:#8b8e8f}
  .icon{width:28px;display:flex;padding-left:4px}
  h1{flex:1;margin:0;font-size:12px;font-weight:700;text-align:center}
  nav{display:flex}
  nav button{width:23px;height:24px;display:flex;align-items:center;justify-content:center}
  </style>
  <header><span class="icon"><xf-icon name="${el.getAttribute('icon')}" size="22"></xf-icon></span><h1>${el.getAttribute('heading')}</h1>
  <nav><button aria-label="Shade"><xf-icon name="shade"></xf-icon></button><button aria-label="Minimize"><xf-icon name="min"></xf-icon></button><button aria-label="Maximize"><xf-icon name="max"></xf-icon></button><button aria-label="Close window"><xf-icon name="cross"></xf-icon></button></nav></header>
  <slot></slot>`);

/* ---------- file manager ---------- */
element('xf-folder', el => `<style>
  :host{display:block}
  button{width:100%;display:flex;flex-direction:column;align-items:center;gap:2px;color:#1a1a1a;white-space:nowrap}
  svg{overflow:visible}
  </style><button><svg width="64" height="56" viewBox="0 0 64 56" aria-hidden="true">
    <linearGradient id="f" x2="0" y2="1"><stop stop-color="#efdfc3"/><stop offset="1" stop-color="#e7c48e"/></linearGradient>
    <path d="M3.500 12V5l2-.5V2q0-1.500 1.500-1.500h19q1.500 0 1.500 1.500v2.500h32v8z" fill="#fafafa" stroke="#b4b4b4"/>
    <path d="M4 50h57" stroke="#0003" stroke-width="2"/>
    <path d="M1.500 12q0-.500.500-.500h60q.5 0 .5.500l-1.300 37h-58z" fill="url(#f)" stroke="#b99a63"/><path d="M2.500 12.500h59" stroke="#faf0dc"/>
    ${el.hasAttribute('home') ? `<path transform="translate(18 16) scale(1.200)" d="${house}" fill="#b29061"/>` : ''}
    ${el.hasAttribute('linked') ? '<path d="M52 39l11-11v6q9 0 9-7h4q2 15-13 16v7z" fill="#333" stroke="#fff" stroke-width="3" stroke-linejoin="round" paint-order="stroke" style="filter:drop-shadow(0 1px 1px #0005)"/>' : ''}
  </svg><span><slot></slot></span></button>`);

element('xf-thunar', () => `<style>
  :host{display:block}
  .menubar{display:flex;height:26px;align-items:center;gap:1px;padding:1px 0 0 1px;border-bottom:1px solid #dcdad8}
  .menubar button{padding:0 8px}
  .tools{display:flex;height:42px;align-items:center;padding-right:4px}
  .tools>button{width:38px;display:flex;justify-content:center}
  .tools>button:last-child{width:36px}
  .path{flex:1;display:flex;align-items:center;gap:6px;height:34px;padding-left:8px;background:#fff;border:1px solid #c6c2be;border-radius:5px}
  input{flex:1;min-width:0;outline:0}
  .warn{height:36px;display:flex;align-items:center;padding:0 10px;background:#f1e6da;border-bottom:1px solid #cfc8c0;color:#3d4143;white-space:nowrap;overflow:hidden}
  .panes{display:flex;height:376px}
  aside{width:171px;padding-top:4px;background:#fff;border-right:1px solid #c9c6c3}
  aside>*{display:flex;align-items:center;height:26px;width:100%;gap:4px;padding-left:16px;white-space:nowrap;overflow:hidden}
  aside b{padding-left:6px}
  .on{background:#3584e4;color:#fff}
  .main{flex:1;min-width:0;display:flex;flex-direction:column}
  .files{flex:1;min-height:0;overflow:hidden;background:#fff;display:grid;grid-template-columns:repeat(auto-fill,112px);align-content:start;row-gap:20px;padding:17px 0 0 3px}
  footer{display:flex;gap:17px;height:27px;align-items:center;padding:1px 0 0 14px;border-top:1px solid #c9c6c3;color:#3d4143}
  </style>
  <div class="menubar"><button>File</button><button>Edit</button><button>View</button><button>Go</button><button>Bookmarks</button><button>Help</button></div>
  <div class="tools"><button aria-label="Back"><xf-icon name="left"></xf-icon></button><button aria-label="Forward"><xf-icon name="right"></xf-icon></button><button aria-label="Open parent"><xf-icon name="up"></xf-icon></button><button aria-label="Home"><xf-icon name="home" size="22"></xf-icon></button>
    <label class="path"><xf-icon name="drive" size="18"></xf-icon><input aria-label="Location" value="/"></label>
    <button aria-label="Search"><xf-icon name="find"></xf-icon></button></div>
  <div class="warn">Warning: you are using the root account. You may harm your system.</div>
  <div class="panes">
    <aside><b>Places</b><button>root</button><button>Trash</button><b>Devices</b><button class="on"><xf-icon name="drive"></xf-icon>File System</button></aside>
    <div class="main"><div class="files">
      <xf-folder>apex</xf-folder><xf-folder linked>bin</xf-folder><xf-folder>boot</xf-folder><xf-folder>data</xf-folder>
      <xf-folder>dev</xf-folder><xf-folder>etc</xf-folder><xf-folder>home</xf-folder><xf-folder linked>lib</xf-folder>
      <xf-folder>linkerconfig</xf-folder><xf-folder>mnt</xf-folder><xf-folder>odm</xf-folder><xf-folder>opt</xf-folder>
      <xf-folder></xf-folder><xf-folder></xf-folder><xf-folder home></xf-folder><xf-folder></xf-folder>
    </div><footer><span>26 folders</span><span>|</span><span>Free space: 2.4 GiB</span></footer></div>
  </div>`);

/* ---------- settings manager ---------- */
element('xf-setting', el => `<style>
  :host{display:block}
  button{display:flex;align-items:center;gap:2px;width:100%;height:52px}
  span{padding-top:2px}
  </style><button><xf-icon name="${el.getAttribute('icon')}"></xf-icon><span><slot></slot></span></button>`);
element('xf-section', el => `<style>
  :host{display:block;margin-bottom:5px}
  h2{margin:0;padding-top:7px;font-size:13px;line-height:16px;border-bottom:1px solid #dcdcdc}
  div{display:grid;grid-template-columns:repeat(auto-fill,184px);row-gap:4px;padding-left:1px}
  </style><h2>${el.getAttribute('heading')}</h2><div><slot></slot></div>`);
element('xf-settings', () => `<style>
  :host{display:block;color:#3d4143}
  .top{display:flex;justify-content:flex-end;padding:6px 7px}
  .search{display:flex;align-items:center;gap:6px;width:168px;height:34px;padding:0 8px;background:#fcfcfc;border:1px solid #cfcbc7;border-radius:5px}
  input{width:100%;min-width:0;outline:0}
  .list{height:412px;overflow:hidden;margin:0 8px 8px;padding:0 6px;background:#fcfcfc;border:1px solid #cfcbc7}
  .actions{display:flex;gap:6px}
  .actions button{width:142px;height:34px;display:flex;align-items:center;justify-content:center;gap:2px;border:1px solid #cfcbc7;border-radius:5px;color:#8b8e8f}
  .actions button:first-child{margin-right:auto}
  .actions button:disabled{background:#faf9f8;color:#cfcfce}
  .actions button:last-child{gap:4px}
  </style>
  <div class="top"><label class="search"><xf-icon name="findthin"></xf-icon><input type="search" aria-label="Search settings"></label></div>
  <div class="list">
    <xf-section heading="Personal">
      <xf-setting icon="appearance">Appearance</xf-setting><xf-setting icon="clipboard">Clipboard<br>Manager Settings</xf-setting><xf-setting icon="desktop">Desktop</xf-setting>
      <xf-setting icon="hammerbig">File Manager<br>Settings</xf-setting><xf-setting icon="bell">Notifications</xf-setting><xf-setting icon="panel">Panel</xf-setting>
      <xf-setting icon="editor">Text Editor<br>Settings</xf-setting><xf-setting icon="winman">Window Manager</xf-setting><xf-setting icon="tweaks">Window Manager<br>Tweaks</xf-setting>
      <xf-setting icon="workspaces">Workspaces</xf-setting><xf-setting icon="saver">Xfce Screensaver</xf-setting><xf-setting icon="termset">Xfce Terminal<br>Settings</xf-setting>
    </xf-section>
    <xf-section heading="Hardware">
      <xf-setting icon="color">Color Profiles</xf-setting><xf-setting icon="display">Display</xf-setting><xf-setting icon="keyboard">Keyboard</xf-setting>
      <xf-setting icon="mouse">Mouse and<br>Touchpad</xf-setting><xf-setting icon="battery">Power Manager</xf-setting><xf-setting icon="usb">Removable Drives<br>and Media</xf-setting>
    </xf-section>
    <xf-section heading="System"></xf-section>
  </div>
  <div class="actions"><button><xf-icon name="help"></xf-icon>Help</button><button disabled><xf-icon name="back"></xf-icon>All Settings</button><button><xf-icon name="cross"></xf-icon>Close</button></div>`);
</script>
</body>
</html>
